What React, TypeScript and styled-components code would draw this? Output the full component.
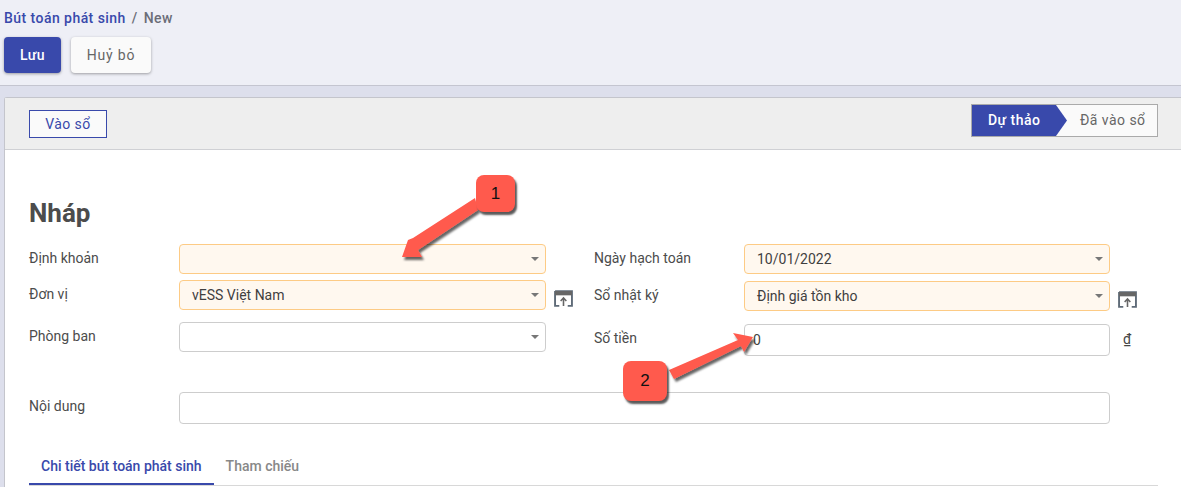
import React from 'react';
import styled, {createGlobalStyle} from 'styled-components';

const Global = createGlobalStyle`
  html, body {
    margin: 0;
    padding: 0;
    background: #dddfec;
    overflow: hidden;
  }
  * { box-sizing: border-box; }
`;

const Page = styled.div`
  position: relative;
  width: 1181px;
  height: 487px;
  overflow: hidden;
  font-family: Roboto, 'Liberation Sans', sans-serif;
  font-size: 14px;
  color: #4c4c4c;
`;

const ControlPanel = styled.header`
  height: 86px;
  padding: 10px 4px 0;
  background: #eeeff6;
  border-bottom: 1px solid #c4c5d0;
`;

const Breadcrumb = styled.div`
  display: flex;
  gap: 6px;
  height: 17px;
  line-height: 17px;
  font-size: 14px;
  font-weight: 500;
  letter-spacing: 0.45px;
  color: #6b6d78;
`;

const Crumb = styled.span`
  color: #3949ab;
`;

const Buttons = styled.div`
  display: flex;
  gap: 10px;
  margin-top: 10px;
`;

const Button = styled.button<{$primary?: boolean}>`
  height: 36px;
  width: ${(p) => (p.$primary ? '57px' : '80px')};
  padding: 0;
  border: 0;
  border-radius: 4px;
  font: ${(p) => (p.$primary ? 500 : 400)} 14px Roboto, sans-serif;
  letter-spacing: ${(p) => (p.$primary ? '0.5px' : '0.8px')};
  color: ${(p) => (p.$primary ? '#fff' : '#666')};
  background: ${(p) => (p.$primary ? '#3949ab' : '#fafafa')};
  box-shadow: 0 1px 3px rgba(0, 0, 0, 0.35);
`;

const Sheet = styled.main`
  height: 390px;
  margin: 11px 0 0 4px;
  background: #fff;
  border-top: 1px solid #c4c5cc;
  border-left: 1px solid #c4c5cc;
  border-top-left-radius: 3px;
`;

const StatusBar = styled.div`
  display: flex;
  align-items: center;
  justify-content: space-between;
  height: 52px;
  padding: 0 23px 0 24px;
  background: #eee;
  border-bottom: 1px solid #cfd0d4;
`;

const PostButton = styled.button`
  width: 78px;
  height: 28px;
  padding: 0;
  border: 1px solid #3949ab;
  background: #fafafa;
  font: 400 14px Roboto, sans-serif;
  letter-spacing: 0.4px;
  color: #3949ab;
`;

const Stages = styled.div`
  display: flex;
  align-self: flex-start;
  margin-top: 6px;
  height: 33px;
  width: 187px;
  border: 1px solid #aaa;
  background: #fafafa;
  letter-spacing: 0.45px;
`;

const ActiveStage = styled.div`
  width: 95px;
  padding-left: 16px;
  line-height: 31px;
  font-weight: 500;
  color: #fff;
  background: #3949ab;
  clip-path: polygon(0 0, 84px 0, 100% 50%, 84px 100%, 0 100%);
`;

const Stage = styled.div`
  flex: 1;
  padding-left: 13px;
  line-height: 31px;
  color: #666;
`;

const Body = styled.div`
  padding: 47px 23px 0 24px;
`;

const Title = styled.h1`
  margin: 0;
  height: 32px;
  line-height: 32px;
  font-size: 26px;
  font-weight: 700;
  color: #4c4c4c;
`;

const FormGrid = styled.div`
  display: grid;
  grid-template-columns: 565px 1fr;
  margin-top: 15px;
`;

const Column = styled.div`
  display: flex;
  flex-direction: column;
`;

const Row = styled.div<{$top?: number}>`
  display: flex;
  align-items: center;
  margin-top: ${(p) => p.$top ?? 0}px;
`;

const Label = styled.label<{$lift?: number}>`
  flex: none;
  width: 150px;
  position: relative;
  top: -${(p) => p.$lift ?? 1}px;
  color: #4c4c4c;
`;

const Field = styled.div<{
  $required?: boolean;
  $width?: number;
  $height?: number;
  $inset?: number;
}>`
  position: relative;
  flex: none;
  display: flex;
  align-items: center;
  width: ${(p) => p.$width ?? 367}px;
  height: ${(p) => p.$height ?? 30}px;
  padding: 0 ${(p) => p.$inset ?? 12}px;
  border: 1px solid ${(p) => (p.$required ? '#fdcb85' : '#cdcdcd')};
  border-radius: 4px;
  background: ${(p) => (p.$required ? '#fff8ef' : '#fff')};
  color: #3f3f3f;
`;

const Caret = styled.span`
  position: absolute;
  right: 6px;
  top: 50%;
  margin-top: -2px;
  border-top: 4px solid #777;
  border-left: 4px solid transparent;
  border-right: 4px solid transparent;
`;

const Trailing = styled.span`
  margin: 7px 0 0 8px;
  display: flex;
  align-items: center;
  color: #555;
`;

const Currency = styled.span`
  margin: -2px 0 0 13px;
  text-decoration: underline;
  font-size: 14px;
  color: #444;
`;

const Tabs = styled.nav`
  display: flex;
  margin-top: 24px;
  border-bottom: 1px solid #d8d8d8;
`;

const Tab = styled.div<{$active?: boolean}>`
  padding: 0 12px;
  height: 37px;
  line-height: 36px;
  font-weight: 500;
  color: ${(p) => (p.$active ? '#3949ab' : '#888')};
  border-bottom: ${(p) => (p.$active ? '2px solid #3949ab' : '0')};
`;

const Callout = styled.div<{$x: number; $y: number; $w: number; $h: number}>`
  position: absolute;
  left: ${(p) => p.$x}px;
  top: ${(p) => p.$y}px;
  width: ${(p) => p.$w}px;
  height: ${(p) => p.$h}px;
  border-radius: 8px;
  background: #ff5a4d;
  box-shadow: 2px 3px 2px rgba(0, 0, 0, 0.65);
  font: 400 17px 'Liberation Sans', Arial, sans-serif;
  line-height: ${(p) => p.$h}px;
  text-align: center;
  color: #111;
`;

const ArrowLayer = styled.svg`
  position: absolute;
  left: 0;
  top: 0;
  pointer-events: none;
`;

const OpenIcon = () => (
  <svg width="19" height="17" viewBox="0 0 18 16" fill="none">
    <path d="M1 1h16v14h-4M1 1v14h4" stroke="#5f6b78" strokeWidth="1.8" />
    <rect x="1" y="1" width="16" height="4" fill="#666" />
    <path d="M9 15V8M6.3 10.3 9 7.5l2.7 2.8" stroke="#666" strokeWidth="1.5" />
  </svg>
);

const App = () => (
  <Page>
    <Global />
    <ControlPanel>
      <Breadcrumb>
        <Crumb>Bút toán phát sinh</Crumb>
        <span>/</span>
        <span>New</span>
      </Breadcrumb>
      <Buttons>
        <Button $primary>Lưu</Button>
        <Button>Huỷ bỏ</Button>
      </Buttons>
    </ControlPanel>
    <Sheet>
      <StatusBar>
        <PostButton>Vào sổ</PostButton>
        <Stages>
          <ActiveStage>Dự thảo</ActiveStage>
          <Stage>Đã vào sổ</Stage>
        </Stages>
      </StatusBar>
      <Body>
        <Title>Nháp</Title>
        <FormGrid>
          <Column>
            <Row>
              <Label>Định khoản</Label>
              <Field $required>
                <Caret />
              </Field>
            </Row>
            <Row $top={6}>
              <Label>Đơn vị</Label>
              <Field $required>
                vESS Việt Nam
                <Caret />
              </Field>
              <Trailing>
                <OpenIcon />
              </Trailing>
            </Row>
            <Row $top={12}>
              <Label>Phòng ban</Label>
              <Field>
                <Caret />
              </Field>
            </Row>
          </Column>
          <Column>
            <Row>
              <Label>Ngày hạch toán</Label>
              <Field $required $width={366}>
                10/01/2022
                <Caret />
              </Field>
            </Row>
            <Row $top={7}>
              <Label>Sổ nhật ký</Label>
              <Field $required $width={366}>
                Định giá tồn kho
                <Caret />
              </Field>
              <Trailing>
                <OpenIcon />
              </Trailing>
            </Row>
            <Row $top={13}>
              <Label $lift={2}>Số tiền</Label>
              <Field $width={366} $height={32} $inset={8}>
                0
              </Field>
              <Currency>₫</Currency>
            </Row>
          </Column>
        </FormGrid>
        <Row $top={36}>
          <Label $lift={2}>Nội dung</Label>
          <Field $width={931} $height={32} />
        </Row>
        <Tabs>
          <Tab $active>Chi tiết bút toán phát sinh</Tab>
          <Tab>Tham chiếu</Tab>
        </Tabs>
      </Body>
    </Sheet>
    <ArrowLayer width="1181" height="487" viewBox="0 0 1181 487">
      <defs>
        <filter id="drop" x="-20%" y="-20%" width="150%" height="150%">
          <feDropShadow dx="2" dy="3" stdDeviation="1" floodColor="#000" floodOpacity="0.6" />
        </filter>
      </defs>
      <path
        d="M475 198 413 238 408 240 402 257 422 257 418 250 478 210Z"
        fill="#ff5a4d"
        filter="url(#drop)"
      />
      <path
        d="M669 370 738 340 733 333 753 337 744 352 741 346 674 379Z"
        fill="#ff5a4d"
        filter="url(#drop)"
      />
    </ArrowLayer>
    <Callout $x={476} $y={175} $w={39} $h={37}>1</Callout>
    <Callout $x={623} $y={361} $w={44} $h={40}>2</Callout>
  </Page>
);

export default App;
